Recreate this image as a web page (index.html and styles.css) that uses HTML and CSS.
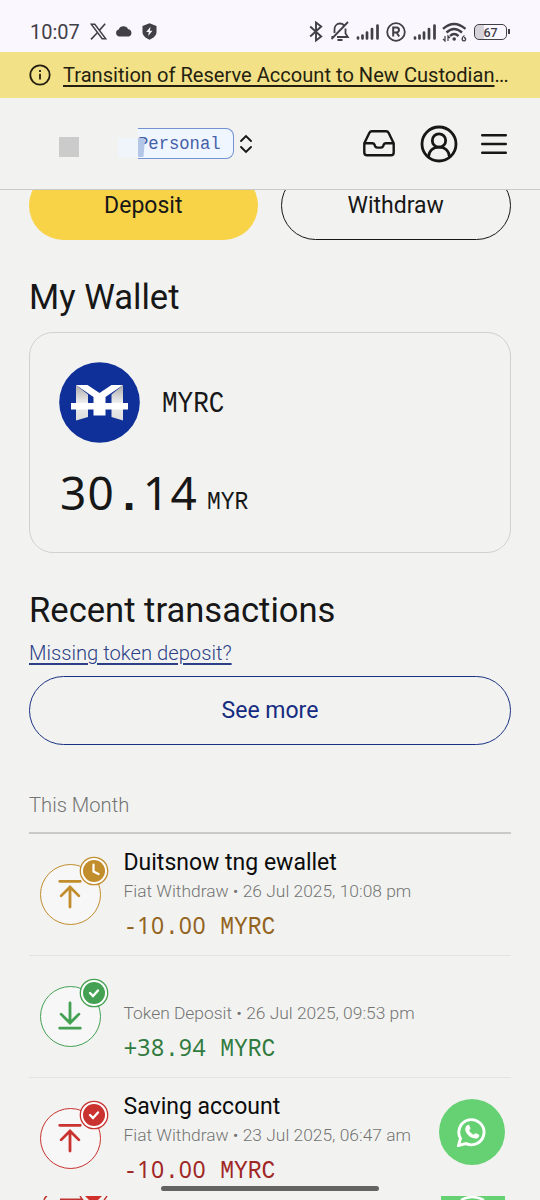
FILE: index.html
```html
<!DOCTYPE html>
<html lang="en">
<head>
    <meta charset="UTF-8">
    <meta name="viewport" content="width=device-width, initial-scale=1.0">
    <title>My Wallet</title>
    <link rel="stylesheet" href="styles.css">
</head>
<body>

    <svg class="sprite">
        <symbol id="up" viewBox="0 0 62 62">
            <path d="M20 17.500h22M31 45V24M21.500 33l9.500-9.500 9.500 9.500"/>
        </symbol>
        <symbol id="down" viewBox="0 0 62 62">
            <path d="M31 17v21M21.500 29l9.500 9.500 9.500-9.500M20 44h22"/>
        </symbol>
        <symbol id="signal" viewBox="0 0 24 16">
            <path d="M2 13.500v1M6.500 11.500v3M11 8.500v6M16 5v9.500M21.500 1.500v13" stroke="currentColor" stroke-width="2.700" stroke-linecap="round"/>
        </symbol>
    </svg>

    <div class="status">
        <div class="status-left">
            <span class="time">10:07</span>
            <svg class="ico-x" width="17" height="17" viewBox="0 0 17 17" fill="none" stroke="currentColor">
                <path d="M1.200 1.200h3.600l11 14.600h-3.600z" stroke-width="1.500"/>
                <path d="M15.200.800L9.300 7.400M7.300 9.700L1 16.400" stroke-width="1.600"/>
            </svg>
            <svg class="ico-cloud" width="18" height="11" viewBox="0 0 18 11" fill="currentColor">
                <path d="M4 10.500a3.600 3.600 0 0 1-.3-7A5.200 5.200 0 0 1 13.200 3.200 3.800 3.800 0 0 1 14 10.500z"/>
            </svg>
            <svg class="ico-shield" width="15" height="17" viewBox="0 0 15 17">
                <path d="M7.500.300L14.500 3v6c0 3.500-3 6-7 7.700C3.500 15 .5 12.500.5 9V3z" fill="currentColor"/>
                <path d="M8.500 3.800L4.200 9h2.600l-.6 4 4.300-5.200H7.900z" fill="#faf7ff"/>
            </svg>
        </div>
        <div class="status-right">
            <svg class="ico-bt" width="14" height="21" viewBox="0 0 14 21" fill="none" stroke="currentColor" stroke-width="1.900">
                <path d="M1.200 5.500l11 10L7 19.500v-18l5.200 4-11 10"/>
            </svg>
            <svg class="ico-bell" width="20" height="21" viewBox="0 0 20 21" fill="none" stroke="currentColor" stroke-width="1.800">
                <path d="M4.500 12V8.500c0-3.300 2.200-6 5.500-6 1.500 0 2.800.5 3.800 1.500M15.500 7.500v5l2.300 3.500H7M1.500 16H4M18 1L1.500 18"/>
                <path d="M7.500 19h5" stroke-width="2"/>
            </svg>
            <svg class="ico-signal" width="24" height="16"><use href="#signal"/></svg>
            <svg class="ico-r" width="20" height="20" viewBox="0 0 20 20" fill="none" stroke="currentColor" stroke-width="1.800">
                <circle cx="10" cy="10" r="8.800"/>
                <path d="M7.200 14.500v-9h3.300a2.500 2.500 0 0 1 0 5H7.200M10.500 10.500l2.700 4" stroke-width="2"/>
            </svg>
            <svg class="ico-signal2" width="24" height="16"><use href="#signal"/></svg>
            <svg class="ico-wifi" width="25" height="20" viewBox="0 0 25 20" fill="none" stroke="currentColor" stroke-width="2.400">
                <path d="M1 6.800Q12 -3 23.500 6.800M4.500 10.500Q12 3.500 20 10.500M8 14Q12 10 16.500 14"/>
                <circle cx="12.200" cy="17" r="1.800" fill="currentColor" stroke="none"/>
                <path d="M3 14v5l-2-2M6 19v-5l2 2" stroke-width="1.200"/>
                <path d="M22.500 13.500q-2.500 1.500-2.300 3.500a1.700 1.700 0 1 0 1.700-1.500" stroke-width="1.400"/>
            </svg>
            <div class="battery"><span>67</span></div>
        </div>
    </div>

    <div class="banner">
        <svg width="22" height="22" viewBox="0 0 22 22" fill="none" stroke="currentColor" stroke-width="1.800">
            <circle cx="11" cy="11" r="9.700"/>
            <path d="M11 9.800v5.800M11 6v2" stroke-width="1.800"/>
        </svg>
        <p><a href="#">Transition of Reserve Account to New Custodian</a><span class="dots">...</span></p>
    </div>

    <div class="header">
        <div class="logo"></div>
        <div class="account">
            <span class="account-type"><span class="tall">Personal</span></span>
            <span class="account-patch"></span>
        </div>
        <svg class="ico-sort" width="14" height="20" viewBox="0 0 14 20" fill="none" stroke="currentColor" stroke-width="1.900" stroke-linecap="round">
            <path d="M2 7l5-5 5 5M2 13l5 5 5-5"/>
        </svg>
        <svg class="ico-inbox" width="32" height="27" viewBox="0 0 32 27" fill="none" stroke="currentColor" stroke-width="2.400" stroke-linejoin="round">
            <path d="M1.300 13.300L6.300 3q.8-1.700 2.700-1.700h14q1.900 0 2.700 1.700l5 10.300v9.200q0 2.800-2.800 2.800H4.100q-2.800 0-2.800-2.800zh8q1.700 0 2.300 1.500l.4 1.200q.6 1.600 2.200 1.600h3.800q1.600 0 2.200-1.600l.4-1.200q.6-1.500 2.300-1.500h7.800"/>
        </svg>
        <svg class="ico-user" width="38" height="38" viewBox="0 0 38 38" fill="none" stroke="currentColor" stroke-width="2.800">
            <circle cx="19" cy="19" r="17"/>
            <circle cx="19" cy="15.500" r="6.700"/>
            <path d="M8.500 32c.5-6 4.500-9.800 10.500-9.800S29 26 29.500 32"/>
        </svg>
        <svg class="ico-menu" width="28" height="22" viewBox="0 0 28 22" fill="none" stroke="currentColor" stroke-width="2.400" stroke-linecap="round">
            <path d="M2.200 2.300h23.600M2.200 11h23.600M2.200 19.700h23.600"/>
        </svg>
    </div>

    <div class="content">
        <div class="actions">
            <button class="btn btn-deposit">Deposit</button>
            <button class="btn btn-withdraw">Withdraw</button>
        </div>

        <h2 class="title">My Wallet</h2>
        <div class="card">
            <div class="coin">
                <svg width="81" height="81" viewBox="0.500 0.500 81 81">
                    <defs>
                        <linearGradient id="fold" x1="0" y1="0" x2="0" y2="1">
                            <stop offset="0" stop-color="#aaa"/>
                            <stop offset=".5" stop-color="#eee"/>
                            <stop offset="1" stop-color="#ddd"/>
                        </linearGradient>
                    </defs>
                    <circle cx="41" cy="41" r="40.300" fill="#0f3099"/>
                    <path d="M17.500 23.500L29.500 33v22.500l-12 3.500zM64.500 23.500L53 33v22.500l11.500 3.500z" fill="url(#fold)"/>
                    <path d="M17.500 23.500H29l12 8 12-8h11.500L47 35.500V54H35V35.500zM12.500 41.500H69.500V48H12.500z" fill="#fff"/>
                </svg>
                <span class="coin-name mono"><span class="tall">MYRC</span></span>
            </div>
            <div class="balance">
                <span class="balance-sum mono"><i>30</i><b>.</b><i>14</i></span>
                <span class="balance-cur mono"><span class="tall">MYR</span></span>
            </div>
        </div>

        <h2 class="title title-recent">Recent transactions</h2>
        <a class="missing" href="#">Missing token deposit?</a>
        <button class="btn btn-more">See more</button>

        <div class="month">This Month</div>

        <div class="row pending">
            <div class="row-icon">
                <svg class="arrow"><use href="#up"/></svg>
                <svg class="badge" viewBox="0 0 30 30">
                    <circle class="ring" cx="15" cy="15" r="13.700"/>
                    <circle class="dot" cx="15" cy="15" r="11"/>
                    <path d="M14.500 8.500v7l5 2.500" stroke-width="2.200"/>
                </svg>
            </div>
            <div class="row-info">
                <p class="row-name">Duitsnow tng ewallet</p>
                <p class="row-date">Fiat Withdraw • 26 Jul 2025, 10:08 pm</p>
                <p class="row-sum mono">-<i>10</i>.<i>00</i> <span class="tall">MYRC</span></p>
            </div>
        </div>

        <div class="row deposit">
            <div class="row-icon">
                <svg class="arrow"><use href="#down"/></svg>
                <svg class="badge" viewBox="0 0 30 30">
                    <circle class="ring" cx="15" cy="15" r="13.700"/>
                    <circle class="dot" cx="15" cy="15" r="11"/>
                    <path d="M11 15l3 3 5-5.500" stroke-width="2.400"/>
                </svg>
            </div>
            <div class="row-info">
                <p class="row-name"></p>
                <p class="row-date">Token Deposit • 26 Jul 2025, 09:53 pm</p>
                <p class="row-sum mono">+<i>38</i>.<i>94</i> <span class="tall">MYRC</span></p>
            </div>
        </div>

        <div class="row withdraw">
            <div class="row-icon">
                <svg class="arrow"><use href="#up"/></svg>
                <svg class="badge" viewBox="0 0 30 30">
                    <circle class="ring" cx="15" cy="15" r="13.700"/>
                    <circle class="dot" cx="15" cy="15" r="11"/>
                    <path d="M11 15l3 3 5-5.500" stroke-width="2.400"/>
                </svg>
            </div>
            <div class="row-info">
                <p class="row-name">Saving account</p>
                <p class="row-date">Fiat Withdraw • 23 Jul 2025, 06:47 am</p>
                <p class="row-sum mono">-<i>10</i>.<i>00</i> <span class="tall">MYRC</span></p>
            </div>
        </div>
    </div>

    <div class="whatsapp">
        <svg width="30" height="30" viewBox="0 0 30 30">
            <path d="M1.500 28.500l2-7A12.600 12.600 0 1 1 9 26.600z" fill="none" stroke="#fff" stroke-width="2.900"/>
            <path d="M10.700 8c.6-.3 1.300-.2 1.600.5l1.100 2.600c.2.500 0 1-1.200 2.300 1 2 2.600 3.500 4.700 4.300 1-1.300 1.500-1.700 2-1.500l2.700 1.300c.7.400.8.900.5 1.800-.5 1.600-2.200 2.500-3.900 2.300-5.300-.6-9.900-5-10-9.500 0-1.600.9-3.300 2.500-4.100z" fill="#fff"/>
        </svg>
    </div>

    <svg class="next" width="540" height="4" viewBox="0 1196 540 4">
        <g fill="none" stroke="#c0322f" stroke-width="1.500">
            <path d="M47 1196q-2 1-3 4M60 1199.300h22M80 1196q1 2 3 4M107 1196q-1 2-3 4"/>
        </g>
        <path d="M85 1196h17l-4 4h-9z" fill="#d0302c"/>
        <path d="M441 1196h64v4h-64z" fill="#66d172"/>
        <path d="M461 1200q11-6 23 0" fill="none" stroke="#fff" stroke-width="2.500"/>
    </svg>
    <div class="home-bar"></div>

</body>
</html>
```
FILE: styles.css
```css
* {
    box-sizing: border-box;
}
body {
    position: relative;
    margin: 0;
    width: 540px;
    height: 1200px;
    overflow: hidden;
    background: #f2f3f1;
    color: #171717;
    font-family: Roboto, sans-serif;
}
p, h2 {
    margin: 0;
    font-weight: 400;
    white-space: nowrap;
}
svg {
    flex-shrink: 0;
}
.sprite {
    display: none;
}

/* digits are plain sans, spaced out to the mono step */
.mono {
    font-family: "Liberation Mono", monospace;
    white-space: pre;
}
.mono i {
    font-family: "Noto Sans", sans-serif;
    font-style: normal;
    letter-spacing: 0.028em;
}
.tall {
    display: inline-block;
    transform: scaleY(1.12);
    transform-origin: 0 72%;
}

.status {
    display: flex;
    justify-content: space-between;
    height: 52px;
    padding: 12px 30px 0;
    background: #faf7ff;
    color: #414047;
}
.status-left, .status-right {
    display: flex;
    align-items: center;
    height: 39px;
}
.time {
    width: 60px;
    font-size: 20px;
}
.ico-cloud {
    margin: 0 9px 0 8px;
}
.ico-bell {
    margin: 0 6px 0 7px;
}
.ico-r {
    margin: 0 7px 0 6px;
}
.ico-wifi {
    margin: 0 7px 0 5px;
}
.battery {
    position: relative;
    width: 33px;
    height: 16px;
    margin-right: 3px;
    border: 1.5px solid #414047;
    border-radius: 5px;
    background: linear-gradient(90deg, #d5d2da 9px, transparent 9px);
    font-size: 12.5px;
    font-weight: 500;
    line-height: 15px;
    text-align: center;
}
.battery::after {
    content: "";
    position: absolute;
    right: -4px;
    top: 4px;
    width: 2px;
    height: 5px;
    background: #414047;
}

.banner {
    display: flex;
    align-items: center;
    gap: 12px;
    height: 46px;
    padding: 0 29px;
    background: #f3e187;
    color: #241f10;
    font-size: 20.1px;
}
.banner a {
    color: inherit;
    text-underline-offset: 3px;
}
.dots {
    letter-spacing: -0.8px;
}

.header {
    display: flex;
    align-items: center;
    height: 92px;
    padding: 0 32px 0 59px;
    border-bottom: 1px solid #c9c9c9;
}
.logo {
    width: 20px;
    height: 20px;
    margin: 7px 59px 0 0;
    background: #cbcbcb;
}
.account {
    position: relative;
    width: 96px;
    height: 31px;
}
.account-type {
    display: block;
    height: 31px;
    border: 1.5px solid #7393d3;
    border-left: 0;
    border-radius: 0 8px 8px 0;
    background: #eff6ff;
    color: #4560a8;
    font: 17.2px/32px "Liberation Mono", monospace;
}
.account-patch {
    position: absolute;
    left: -20px;
    top: 10px;
    width: 27px;
    height: 19px;
    background: linear-gradient(90deg, #f0f5fc 20px, #b3c6e7 20px);
    clip-path: polygon(0 0, 94% 0, 100% 10%, 94% 100%, 0 100%);
}
.ico-sort {
    margin-left: 5px;
}
.ico-inbox {
    margin-left: auto;
}
.ico-user {
    margin: 0 22px 0 25px;
}

.content {
    padding: 0 29px;
}
.actions {
    display: flex;
    align-items: flex-end;
    gap: 23px;
    height: 50px;
    overflow: hidden;
}
.btn {
    display: block;
    flex: 1;
    flex-shrink: 0;
    width: 100%;
    height: 69px;
    padding: 0;
    border: 1.5px solid #171717;
    border-radius: 35px;
    background: transparent;
    color: #171717;
    font-family: inherit;
    font-size: 23px;
}
.btn-deposit {
    border: 0;
    background: #f8d348;
}
.title {
    margin-top: 36px;
    font-size: 34.6px;
    line-height: 42px;
}
.card {
    height: 221px;
    margin-top: 14px;
    padding: 29px;
    border: 1.5px solid #d0d1d0;
    border-radius: 24px;
}
.coin {
    display: flex;
    align-items: center;
    gap: 22px;
    height: 81px;
}
.coin-name {
    padding-top: 4px;
    font-size: 26px;
}
.balance {
    display: flex;
    align-items: baseline;
    gap: 9px;
    margin-top: 17px;
    padding-left: 1px;
    line-height: 64px;
}
.balance-sum {
    font-size: 46px;
}
.balance-cur {
    padding-top: 1px;
    font-size: 23px;
}
.missing {
    display: block;
    margin-top: 9px;
    color: #2c3f86;
    font-size: 20.2px;
    font-weight: 300;
    line-height: 27px;
    text-underline-offset: 3px;
}
.btn-more {
    margin-top: 9px;
    border-color: #1b3183;
    color: #152b80;
}
.month {
    height: 57px;
    margin-top: 32px;
    padding-top: 16px;
    border-bottom: 2px solid #cacac9;
    color: #747473;
    font-size: 20.2px;
    font-weight: 300;
    line-height: 24px;
}

.row {
    display: flex;
    height: 122px;
    padding-left: 11px;
    border-bottom: 1px solid #e2e3e2;
}
.row-icon {
    position: relative;
    width: 61px;
    height: 61px;
    margin: 30px 22.5px 0 0;
    border: 1.5px solid currentColor;
    border-radius: 50%;
    background: #f7f7f7;
}
.arrow {
    display: block;
    width: 58px;
    height: 58px;
    fill: none;
    stroke: currentColor;
    stroke-width: 3;
    stroke-linecap: round;
}
.badge {
    position: absolute;
    left: 38px;
    top: -9px;
    width: 30px;
    height: 30px;
}
.badge .ring {
    fill: #fff;
    stroke: currentColor;
    stroke-width: 1.3;
}
.badge .dot {
    fill: currentColor;
}
.badge path {
    fill: none;
    stroke: #fff;
    stroke-linecap: round;
}
.row-name {
    height: 28px;
    margin-top: 15px;
    color: #0c0c0c;
    font-size: 23px;
    line-height: 28px;
}
.row-date {
    margin-top: 2px;
    color: #747473;
    font-size: 17.4px;
    font-weight: 300;
    line-height: 24px;
}
.row-sum {
    margin-top: 7px;
    font-size: 23px;
    line-height: 30px;
}
.pending .row-icon { color: #c18d2d; }
.pending .row-sum { color: #94641f; }
.deposit .row-icon { color: #44a052; }
.deposit .row-sum { color: #327b40; }
.withdraw .row-icon { color: #c9322f; }
.withdraw .row-sum { color: #a02725; }
.withdraw {
    border-bottom: 0;
}

.whatsapp {
    position: absolute;
    left: 439px;
    top: 1099px;
    display: flex;
    align-items: center;
    justify-content: center;
    width: 66px;
    height: 66px;
    border-radius: 50%;
    background: #66d172;
}
.next {
    position: absolute;
    left: 0;
    bottom: 0;
    background: #f2f3f1;
}
.home-bar {
    position: absolute;
    left: 161px;
    bottom: 9px;
    width: 218px;
    height: 5px;
    border-radius: 3px;
    background: #636462;
}
```
